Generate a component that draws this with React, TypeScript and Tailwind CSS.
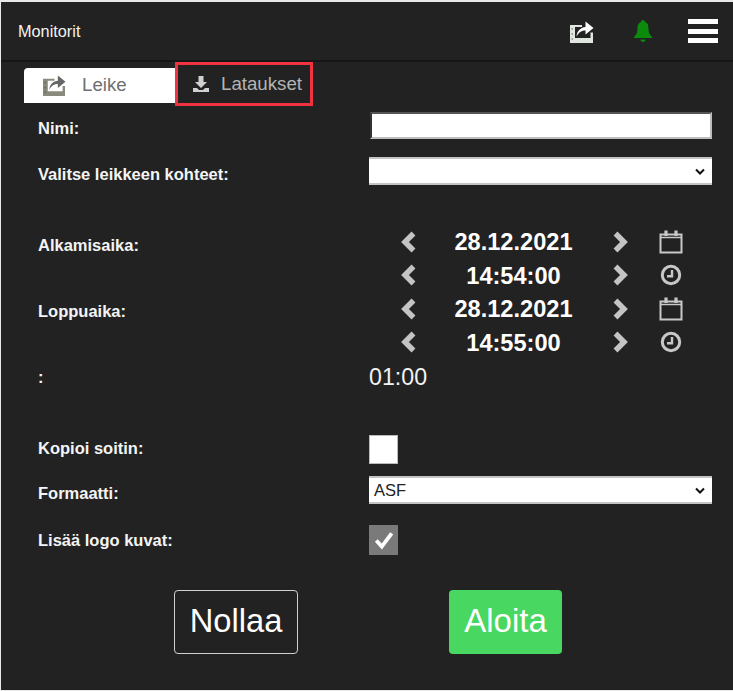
import React from "react";

const FilmShare = ({ className, strip }: { className?: string; strip: string }) => (
  <svg viewBox="0 0 25 24" className={className} fill="none">
    <path d="M1 5h12v2H6v11h15.500v-5.500H24V23H1z" fill={strip} />
    <path d="M2.500 8h1.500v2H2.500zM2.500 13h1.500v2H2.500zM2.500 18h1.500v2H2.500z" fill="#222222" opacity="0.35" />
    <path d="M7.500 16.500C8 10.500 12 7.500 16.500 7V1.500L24.500 8l-8 6.500V10.500c-3.500 0-6.500 1.500-9 6z" fill="currentColor" />
  </svg>
);

const Calendar = () => (
  <svg viewBox="0 0 24 24" className="w-[24px] h-[24px] text-[#c8c8c8]" fill="none" stroke="currentColor" strokeWidth="2">
    <path d="M1.500 4.500h21v18h-21z" />
    <path d="M1.500 7.500h21" strokeWidth="1.500" />
    <path d="M7 0.500v5.500M17 0.500v5.500" strokeWidth="3.200" />
  </svg>
);

const Clock = () => (
  <svg viewBox="0 0 24 24" className="w-[24px] h-[24px] text-[#c8c8c8]" fill="none" stroke="currentColor">
    <circle cx="12" cy="12" r="8.700" strokeWidth="3" />
    <path d="M13 7v6.200H8" strokeWidth="2.400" />
  </svg>
);

const Chevron = ({ dir }: { dir: "l" | "r" }) => (
  <svg viewBox="0 0 16 22" className="w-[16px] h-[22px] text-[#c4c4c4]" fill="none" stroke="currentColor" strokeWidth="5.500">
    <path d={dir === "l" ? "M12.500 2.500 4 11l8.500 8.500" : "M3.500 2.500 12 11l-8.500 8.500"} />
  </svg>
);

const SelectChevron = () => (
  <svg viewBox="0 0 10 7" className="w-[10px] h-[7px] text-[#111]" fill="none" stroke="currentColor" strokeWidth="2">
    <path d="m1 1.500 4 4 4-4" />
  </svg>
);

const Label = ({ children, shift }: { children: React.ReactNode; shift?: string }) => (
  <div className={`w-[368px] shrink-0 pl-[37px] text-[16.500px] font-bold text-[#f4f4f4] ${shift ?? ""}`}>{children}</div>
);

const Stepper = ({ value, icon }: { value: string; icon: React.ReactNode }) => (
  <div className="h-[33.500px] flex items-center">
    <div className="w-[16px] ml-[32px]"><Chevron dir="l" /></div>
    <div className="w-[193px] pt-[2px] text-center text-[23.600px] font-bold text-white">{value}</div>
    <div className="w-[16px] ml-[2px]"><Chevron dir="r" /></div>
    <div className="w-[24px] ml-[31px]">{icon}</div>
  </div>
);

const SelectBox = ({ value }: { value?: string }) => (
  <div className="w-[343px] h-[28px] bg-white border-y-2 border-[#c4c4c4] flex items-center justify-between pl-[5px] pr-[7px] text-[16.500px] text-[#222]">
    <span>{value}</span>
    <SelectChevron />
  </div>
);

export default function App() {
  return (
    <div className="w-[733px] h-[691px] bg-[#e8e8e8] pt-[2px] pb-[1px] pl-[1px] overflow-hidden [font-family:'Liberation_Sans',Arial,sans-serif]">
      <div className="w-[732px] h-[688px] bg-[#222222]">
        <header className="h-[60px] border-b-2 border-[#161616] flex items-center pl-[17px]">
          <span className="text-[16.300px] text-[#f2f2f2] flex-1">Monitorit</span>
          <FilmShare className="w-[25px] h-[24px] text-white mr-[37px] mt-[2px]" strip="#dfe6e0" />
          <svg viewBox="0 0 24 24" className="w-[24px] h-[24px] text-[#0b8a0b] mr-[33px]" fill="currentColor">
            <path d="M12 1c-1.200 0-2 .8-2 2-3 .8-3.500 3.500-3.500 7 0 4-1.500 6-3.500 8v1h18v-1c-2-2-3.500-4-3.500-8 0-3.500-.5-6.200-3.500-7 0-1.200-.8-2-2-2z" />
            <path d="M9.500 20.500h5c0 1.500-1 2.500-2.500 2.500s-2.500-1-2.500-2.500z" />
          </svg>
          <div className="w-[30px] mr-[15px] flex flex-col gap-[4.500px]">
            <div className="h-[5px] bg-white" />
            <div className="h-[5px] bg-white" />
            <div className="h-[5px] bg-white" />
          </div>
        </header>

        <div className="h-[44px] flex items-center pl-[23px]">
          <div className="w-[151px] h-[35px] mt-[2px] bg-white rounded-tl-[4px] flex items-center pl-[18px] text-[#6f6f6f] text-[18.700px]">
            <FilmShare className="w-[24px] h-[23px] text-[#666]" strip="#8a8a7c" />
            <span className="ml-[16px]">Leike</span>
          </div>
          <div className="w-[138px] h-[44px] border-[3px] border-[#ef3340] flex items-center pl-[14px] text-[#b4b4b4] text-[18.700px]">
            <svg viewBox="0 0 18 18" className="w-[18px] h-[18px] text-[#d0d0d0]" fill="currentColor">
              <path d="M6.500 1h5v6H15l-6 6-6-6h3.500z" />
              <path d="M1 13h4l2 2h4l2-2h4v4H1z" />
            </svg>
            <span className="ml-[11px]">Lataukset</span>
          </div>
        </div>

        <div className="mt-[6px] h-[27px] flex items-center">
          <Label shift="mt-[6px]">Nimi:</Label>
          <div className="ml-[1px] w-[342px] h-[27px] bg-white border-[2px] border-[#bdbdbd] border-l-[#333] border-t-[#555]" />
        </div>
        <div className="mt-[18px] h-[28px] flex items-center">
          <Label shift="mt-[6px]">Valitse leikkeen kohteet:</Label>
          <SelectBox />
        </div>

        <div className="mt-[40px] flex">
          <Label shift="pt-[8px]">Alkamisaika:</Label>
          <div>
            <Stepper value="28.12.2021" icon={<Calendar />} />
            <Stepper value="14:54:00" icon={<Clock />} />
          </div>
        </div>
        <div className="flex">
          <Label shift="pt-[7px]">Loppuaika:</Label>
          <div>
            <Stepper value="28.12.2021" icon={<Calendar />} />
            <Stepper value="14:55:00" icon={<Clock />} />
          </div>
        </div>

        <div className="mt-[3px] h-[30px] flex items-center">
          <Label>:</Label>
          <span className="text-[23.200px] text-[#f2f2f2]">01:00</span>
        </div>

        <div className="mt-[43px] h-[29px] flex items-center">
          <Label shift="-mt-[2px]">Kopioi soitin:</Label>
          <div className="w-[29px] h-[29px] bg-white border border-[#bbb]" />
        </div>
        <div className="mt-[12px] h-[28px] flex items-center">
          <Label shift="mt-[6px]">Formaatti:</Label>
          <SelectBox value="ASF" />
        </div>
        <div className="mt-[21px] h-[30px] flex items-center">
          <Label>Lisää logo kuvat:</Label>
          <div className="w-[29px] h-[30px] bg-[#7a7a7a] flex items-center justify-center">
            <svg viewBox="0 0 20 20" className="w-[22px] h-[22px] text-white" fill="none" stroke="currentColor" strokeWidth="3.500">
              <path d="m3 10.500 5 5.500 9-12" />
            </svg>
          </div>
        </div>

        <div className="mt-[35px] flex pl-[173px]">
          <div className="w-[124px] h-[64px] pb-[2px] border border-[#d0d0d0] rounded-[4px] flex items-center justify-center text-[32.700px] text-white">Nollaa</div>
          <div className="ml-[151px] w-[113px] h-[64px] pb-[2px] bg-[#48d760] rounded-[4px] flex items-center justify-center text-[33px] text-white">Aloita</div>
        </div>
      </div>
    </div>
  );
}
